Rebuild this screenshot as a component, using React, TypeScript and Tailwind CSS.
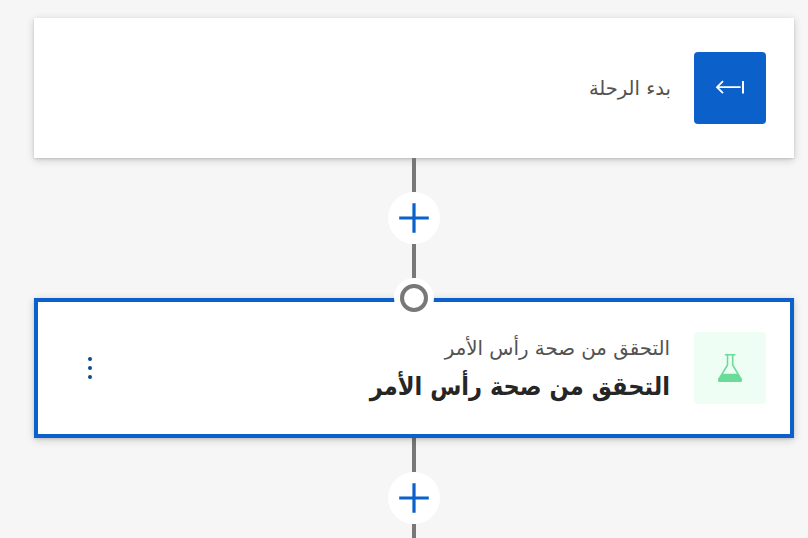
function Plus() {
  return (
    <div className="flex size-[52px] shrink-0 items-center justify-center rounded-full bg-white">
      <svg width="52" height="52" viewBox="0 0 52 52"><path d="M26 11.2v29.6M11.2 26h29.6" stroke="#0b60ca" strokeWidth="3.2" /></svg>
    </div>
  );
}

function Connector() {
  return (
    <div className="flex h-[140px] w-[760px] shrink-0 flex-col items-center">
      <div className="h-[34px] w-1 bg-[#787878]" />
      <Plus />
      <div className="h-[34px] w-1 bg-[#787878]" />
    </div>
  );
}

export default function App() {
  return (
    <div dir="rtl" lang="ar" className="flex h-[538px] w-[808px] flex-col overflow-hidden bg-[#f6f6f6] pt-[18px] pr-[14px] font-['DejaVu_Sans',sans-serif]">
      <div className="flex h-[140px] w-[760px] shrink-0 items-center bg-white pr-7 shadow-[0_2px_8px_rgba(0,0,0,0.18),0_1px_2px_rgba(0,0,0,0.12)]">
        <div className="flex size-[72px] items-center justify-center rounded-[4px] bg-[#0b60ca]">
          <svg width="32" height="32" viewBox="0 0 32 32" fill="none" stroke="white" strokeWidth="2"><path d="M9 9.2L3 15.2l6 6M3 15.2H26.6" strokeWidth="1.8" /><path d="M29 9v12.4" /></svg>
        </div>
        <div className="mr-[23px] pt-0.5 text-[19.5px] leading-7 text-[#525252]">بدء الرحلة</div>
      </div>
      <Connector />
      <div className="relative flex h-[140px] w-[760px] shrink-0 items-center border-4 border-[#0b60ca] bg-white pr-6 shadow-[0_2px_8px_rgba(0,0,0,0.18),0_1px_2px_rgba(0,0,0,0.12)]">
        <div className="absolute -top-6 left-[356px] flex size-10 items-center justify-center rounded-full bg-white">
          <div className="size-7 rounded-full border-4 border-[#787878]" />
        </div>
        <div className="flex size-[72px] items-center justify-center rounded-[4px] bg-[#eefef5]">
          <svg width="32" height="32" viewBox="0 0 32 32" fill="none" stroke="#6bdb98" strokeWidth="1.6"><path d="M10.8 2.8h10.6M13.5 3v10L5 27q-.8 2.3 1.5 2.3h19Q27.8 29.3 27 27L18.7 13V3" /><path d="M8.8 22.500h14.400L27 27q.8 2.300-1.500 2.300h-19Q4.200 29.300 5 27z" fill="#6bdb98" /></svg>
        </div>
        <div className="mr-6 flex flex-col pt-0.5">
          <div className="text-[19.8px] leading-[36px] text-[#525252]">التحقق من صحة رأس الأمر</div>
          <div className="font-['DejaVu_Sans_Condensed','DejaVu_Sans',sans-serif] text-[25.1px] leading-[40px] font-bold text-[#262626] [font-stretch:condensed]">التحقق من صحة رأس الأمر</div>
        </div>
        <div className="mr-auto ml-[50px] flex w-1 flex-col items-center gap-[5.5px]">
          <div className="size-[3.5px] rounded-full bg-[#0b4c8c]" />
          <div className="size-[3.5px] rounded-full bg-[#0b4c8c]" />
          <div className="size-[3.5px] rounded-full bg-[#0b4c8c]" />
        </div>
      </div>
      <Connector />
    </div>
  );
}
